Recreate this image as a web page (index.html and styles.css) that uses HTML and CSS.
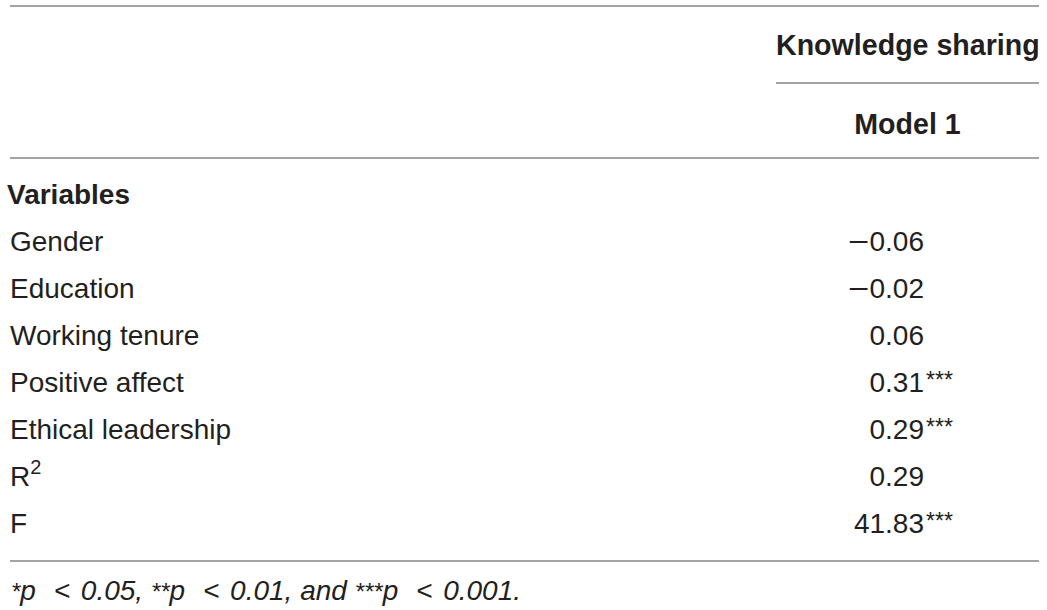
FILE: index.html
```html
<!DOCTYPE html>
<html lang="en">
<head>
<meta charset="utf-8">
<title>Knowledge sharing regression</title>
<link rel="stylesheet" href="styles.css">
</head>
<body>
<div class="table">
  <div class="head1">
    <div></div>
    <div class="group">Knowledge sharing</div>
  </div>
  <div class="head2">
    <div></div>
    <div class="model">Model 1</div>
  </div>
  <div class="body">
    <div class="row"><div class="label section">Variables</div><div class="val"></div></div>
    <div class="row"><div class="label">Gender</div><div class="val"><span class="num"><span class="minus">&minus;</span>0.06</span><span class="sig"></span></div></div>
    <div class="row"><div class="label">Education</div><div class="val"><span class="num"><span class="minus">&minus;</span>0.02</span><span class="sig"></span></div></div>
    <div class="row"><div class="label">Working tenure</div><div class="val"><span class="num">0.06</span><span class="sig"></span></div></div>
    <div class="row"><div class="label">Positive affect</div><div class="val"><span class="num">0.31</span><span class="sig">***</span></div></div>
    <div class="row"><div class="label">Ethical leadership</div><div class="val"><span class="num">0.29</span><span class="sig">***</span></div></div>
    <div class="row"><div class="label">R<sup class="sup">2</sup></div><div class="val"><span class="num">0.29</span><span class="sig"></span></div></div>
    <div class="row"><div class="label">F</div><div class="val"><span class="num">41.83</span><span class="sig">***</span></div></div>
  </div>
  <div class="note"><span class="ast">*</span>p <span class="lt">&lt;</span> 0.05, <span class="ast">**</span>p <span class="lt">&lt;</span> 0.01, and <span class="ast">***</span>p <span class="lt">&lt;</span> 0.001.</div>
</div>
</body>
</html>
```
FILE: styles.css
```css
html, body {
  margin: 0;
  padding: 0;
  background: #ffffff;
}

.table {
  margin: 5px 0 0 10px;
  width: 1029px;
  font-family: "Liberation Sans", Arial, "Helvetica Neue", sans-serif;
  font-size: 28px;
  color: #231f20;
  border-top: 2px solid #a3a3a3;
}

.head1,
.head2,
.row {
  display: grid;
  grid-template-columns: 1fr 263px;
}

.group {
  font-weight: bold;
  font-size: 28.6px;
  text-align: center;
  line-height: 32px;
  padding: 22px 0 21px;
  border-bottom: 2px solid #a3a3a3;
  white-space: nowrap;
}

.head2 {
  border-bottom: 2px solid #a3a3a3;
}

.model {
  font-weight: bold;
  font-size: 28.6px;
  text-align: center;
  line-height: 32px;
  padding: 24px 0 17px;
}

.body {
  padding: 12px 0 13px;
  border-bottom: 2px solid #a3a3a3;
}

.row {
  height: 47px;
  line-height: 47px;
}

.label {
  white-space: nowrap;
}

.section {
  font-weight: bold;
  margin-left: -3px;
}

.sup {
  font-size: 20px;
  line-height: 0;
  vertical-align: 12px;
}

.val {
  display: grid;
  grid-template-columns: 148px 1fr;
}

.num {
  text-align: right;
}

.minus {
  display: inline-block;
  transform: scaleX(1.3);
  transform-origin: right center;
}

.sig {
  text-align: left;
  font-size: 23px;
  padding-left: 2px;
  position: relative;
  top: -2px;
}

.note {
  font-style: italic;
  line-height: 32px;
  padding-top: 13px;
  margin-left: 1px;
  white-space: nowrap;
}

.ast {
  font-size: 24px;
}

.lt {
  margin: 0 3px 0 10px;
}
```
